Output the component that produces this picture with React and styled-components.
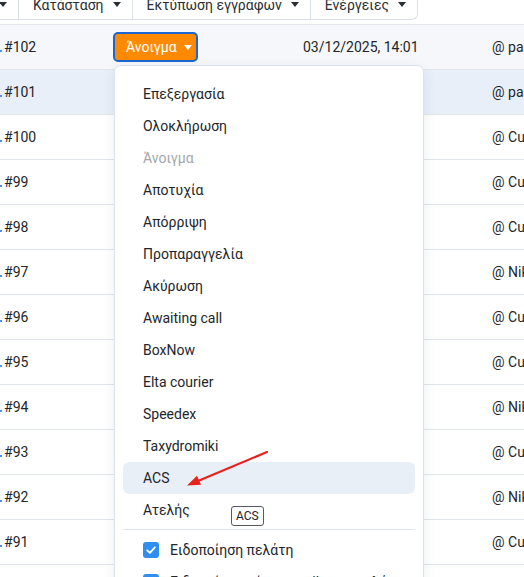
import React from "react";
import styled, { createGlobalStyle } from "styled-components";

const Global = createGlobalStyle`
  html, body {
    margin: 0;
    padding: 0;
    background: #ffffff;
    overflow: hidden;
  }
  body {
    font-family: Roboto, "Noto Sans", "Liberation Sans", sans-serif;
    color: #212529;
    font-size: 14px;
  }
  * { box-sizing: border-box; }
`;

const Page = styled.div`
  display: flex;
  flex-direction: column;
  width: 524px;
  height: 577px;
  overflow: hidden;
`;

const Toolbar = styled.div`
  display: flex;
  align-self: flex-start;
  height: 30px;
  margin-top: -10px;
  margin-left: -73px;
  background: #fff;
  border: 1px solid #dbe0e8;
  border-top: none;
  border-radius: 0 0 6px 0;
`;

const ToolButton = styled.div`
  display: flex;
  align-items: center;
  justify-content: ${(p) => (p.$cut ? "flex-end" : "flex-start")};
  gap: 9px;
  padding: 0 11px 0 14px;
  height: 100%;
  width: ${(p) => (p.$cut ? "90px" : "auto")};
  border-left: ${(p) => (p.$first ? "none" : "1px solid #dbe0e8")};
  color: #2b2f33;
  font-size: 14px;
  white-space: nowrap;
  overflow: hidden;
`;

const Caret = styled.span`
  display: inline-block;
  width: 0;
  height: 0;
  border-left: 4px solid transparent;
  border-right: 4px solid transparent;
  border-top: 5px solid ${(p) => p.$color || "#2b2f33"};
`;

const Table = styled.div`
  display: flex;
  flex-direction: column;
  margin-top: 4px;
  border-top: 1px solid #e3e7ee;
`;

const Row = styled.div`
  display: grid;
  grid-template-columns: 113px 190px 189px 1fr;
  align-items: center;
  height: 45px;
  border-bottom: 1px solid #e1e5ec;
  background: ${(p) =>
    p.$tone === "hover" ? "#f5f7fa" : p.$tone === "active" ? "#e9eff8" : "#ffffff"};
  font-size: 14px;
  color: #22262a;
  white-space: nowrap;
`;

const IdCell = styled.div`
  display: flex;
  align-items: flex-end;
  gap: 2px;
`;

const LinkTail = styled.span`
  display: inline-block;
  width: 2px;
  height: 2px;
  margin-bottom: 3px;
  background: #4a93e6;
`;

const Cell = styled.div`
  overflow: hidden;
`;

const StatusWrap = styled.div`
  position: relative;
  display: flex;
  align-items: center;
  height: 100%;
`;

const StatusButton = styled.div`
  display: flex;
  align-items: center;
  gap: 7px;
  height: 30px;
  padding: 0 4px 0 11px;
  background: #ff8a00;
  border: 2px solid #1b66d2;
  border-radius: 5px;
  color: #ffffff;
  font-size: 14px;
`;

const Menu = styled.div`
  position: absolute;
  top: 40px;
  left: 1px;
  width: 310px;
  padding: 12px 8px 8px;
  background: #ffffff;
  border: 1px solid #dde3ec;
  border-radius: 7px;
  box-shadow: 0 4px 14px rgba(30, 45, 70, 0.08);
  z-index: 5;
`;

const MenuItem = styled.div`
  display: flex;
  align-items: center;
  height: 32px;
  padding-left: 20px;
  border-radius: 6px;
  font-size: 14px;
  color: ${(p) => (p.$disabled ? "#a3a7ad" : "#22262a")};
  background: ${(p) => (p.$active ? "#e9eff7" : "transparent")};
`;

const Divider = styled.div`
  height: 1px;
  margin: 3px 0 4px;
  background: #e1e5ec;
`;

const CheckItem = styled.label`
  display: flex;
  align-items: center;
  gap: 11px;
  height: 32px;
  padding-left: 20px;
  font-size: 14px;
  color: #22262a;
  white-space: nowrap;
`;

const CheckBox = styled.span`
  display: inline-flex;
  align-items: center;
  justify-content: center;
  width: 16px;
  height: 16px;
  border-radius: 3px;
  background: #2f8ef0;
`;

const Tip = styled.div`
  position: absolute;
  left: 116px;
  top: 440px;
  padding: 1px 4px;
  height: 20px;
  border: 1px solid #555a60;
  border-radius: 3px;
  background: #ffffff;
  color: #1f2226;
  font-size: 12px;
  line-height: 17px;
`;

const Pointer = styled.svg`
  position: absolute;
  left: 71px;
  top: 383px;
  overflow: visible;
`;

const statuses = [
  { label: "Επεξεργασία" },
  { label: "Ολοκλήρωση" },
  { label: "Άνοιγμα", disabled: true },
  { label: "Αποτυχία" },
  { label: "Απόρριψη" },
  { label: "Προπαραγγελία" },
  { label: "Ακύρωση" },
  { label: "Awaiting call" },
  { label: "BoxNow" },
  { label: "Elta courier" },
  { label: "Speedex" },
  { label: "Taxydromiki" },
  { label: "ACS", active: true },
  { label: "Ατελής" },
];

const orders = [
  { id: 102, user: "panos.k", tone: "hover", open: true },
  { id: 101, user: "panos.k", tone: "active" },
  { id: 100, user: "Customer" },
  { id: 99, user: "Customer" },
  { id: 98, user: "Customer" },
  { id: 97, user: "Nikos" },
  { id: 96, user: "Customer" },
  { id: 95, user: "Customer" },
  { id: 94, user: "Nikos" },
  { id: 93, user: "Customer" },
  { id: 92, user: "Nikos" },
  { id: 91, user: "Customer" },
];

function Check() {
  return (
    <CheckBox>
      <svg width="12" height="12" viewBox="0 0 12 12">
        <path d="M2.2 6.3 L4.9 8.8 L9.8 3.4" fill="none" stroke="#fff" strokeWidth="1.8" strokeLinecap="round" strokeLinejoin="round" />
      </svg>
    </CheckBox>
  );
}

function StatusMenu() {
  return (
    <Menu>
      {statuses.map((s) => (
        <MenuItem key={s.label} $disabled={s.disabled} $active={s.active}>
          {s.label}
        </MenuItem>
      ))}
      <Divider />
      <CheckItem>
        <Check />
        Ειδοποίηση πελάτη
      </CheckItem>
      <CheckItem>
        <Check />
        Ειδοποίηση μέσω email στον πελάτη
      </CheckItem>
      <Tip>ACS</Tip>
      <Pointer width="83" height="39" viewBox="0 0 83 39">
        <line x1="81" y1="3" x2="12" y2="32" stroke="#e8211d" strokeWidth="2.2" strokeLinecap="round" />
        <polygon points="1,36.5 15,35.8 11,26.8" fill="#e8211d" />
      </Pointer>
    </Menu>
  );
}

export default function App() {
  return (
    <>
      <Global />
      <Page>
        <Toolbar>
          <ToolButton $first $cut>
            Εξαγωγή <Caret />
          </ToolButton>
          <ToolButton>
            Κατάσταση <Caret />
          </ToolButton>
          <ToolButton>
            Εκτύπωση εγγράφων <Caret />
          </ToolButton>
          <ToolButton>
            Ενέργειες <Caret />
          </ToolButton>
        </Toolbar>
        <Table>
          {orders.map((o) => (
            <Row key={o.id} $tone={o.tone}>
              <IdCell>
                <LinkTail />
                <span>#{o.id}</span>
              </IdCell>
              {o.open ? (
                <StatusWrap>
                  <StatusButton>
                    Άνοιγμα <Caret $color="#ffffff" />
                  </StatusButton>
                  <StatusMenu />
                </StatusWrap>
              ) : (
                <Cell />
              )}
              <Cell>{o.open ? "03/12/2025, 14:01" : ""}</Cell>
              <Cell>@ {o.user}</Cell>
            </Row>
          ))}
        </Table>
      </Page>
    </>
  );
}
